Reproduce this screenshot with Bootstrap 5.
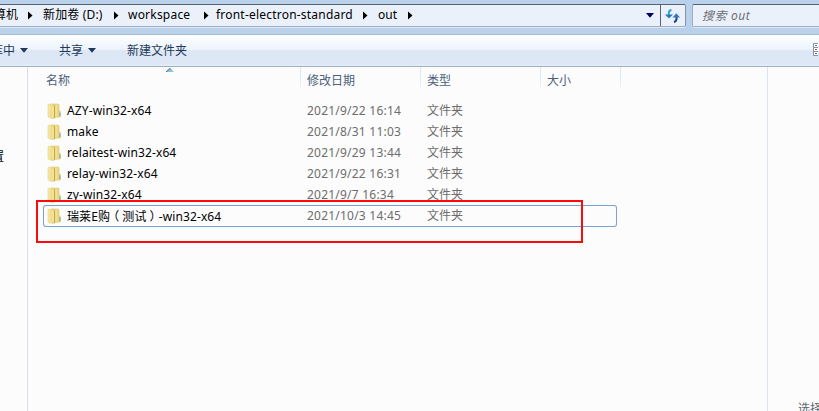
<!DOCTYPE html>
<html lang="zh-CN">
<head>
<meta charset="utf-8">
<meta name="viewport" content="width=device-width, initial-scale=1">
<title>out</title>
<link href="https://cdn.jsdelivr.net/npm/bootstrap@5.3.0/dist/css/bootstrap.min.css" rel="stylesheet">
<style>
body{width:819px;height:411px;background:#fcfcfc;color:#000;font-family:"Noto Sans","Noto Sans CJK SC",sans-serif;font-size:12px;line-height:20px;white-space:nowrap}
.addressbar{height:35px;background:#b9d1ea;padding-top:4px;border-bottom:1px solid #a5bbd6}
.crumbs,.searchbox{height:23px;background:#ebf1fa;border:1px solid #a0adbd;border-top-color:#59636f;box-shadow:0 1px 0 #dce8f5}
.crumbs{width:686px;border-left:0;border-right-color:#8793a3;border-radius:0 2px 2px 0}
.crumb{position:relative;height:21px}
.crumb svg{position:absolute;top:6px}
.c1{width:42px;margin-left:-18px;margin-right:18px}
.c2{width:86px}.c3{width:88px}.c4{width:162px}.c5{width:60px}
.c1 svg{right:-9px}.c2 svg{right:9px}.c3 svg{right:7px}.c4 svg{right:10px}.c5 svg{right:25px}
.t2{margin-left:1px;letter-spacing:.15px}.t4{letter-spacing:.21px}
.dropmark{margin-right:6px}
.refresh{width:25px;border-left:1px solid #59636f}
.searchbox{margin-left:6px;border-right:0;border-radius:2px 0 0 2px;padding-left:9px;color:#6c7076;font-style:italic;line-height:22px;letter-spacing:.6px}
.tools{height:32px;background:linear-gradient(#fdfeff 0,#edf4fc 14px,#dce6f4 16px,#dde7f5 29px,#e4eef9 30px);border-bottom:1px solid #a0afc3;color:#1e395b;line-height:31px;overflow:hidden}
.tool-a{width:59px}.lib{margin-left:-9px;margin-right:5px}
.tool-b{width:68px}.tool-b span{margin-right:5px}
.tool-a svg,.tool-b svg{vertical-align:2px}
.view-icon{margin-top:8px;margin-right:1px}
.side{width:28px;border-right:1px solid #d6e0ee}
.side-label{margin-left:-8px;padding-top:80px}
.files{width:740px;border-right:1px solid #d6e5f5}
.heads{height:33px;color:#4c607a;line-height:27px}
.heads>div{padding-left:6px;background:linear-gradient(#d6e5f5 0,#dfebf7 12px,#fcfcfc 24px) right top/1px 24px no-repeat}
.h-name{width:273px}.heads>.h-name{padding-left:18px}
.h-date,.h-type{width:120px}.h-size{width:80px}
.entry{height:21px;width:574px;margin-left:15px;line-height:21px;color:#6d6d6d}
.entry .fname{width:264px;color:#000;padding-left:4px}
.entry .ftitle{margin-left:6px;letter-spacing:.12px}
.entry .fdate{width:120px;letter-spacing:.22px}
.paren-l{margin-left:-3px;margin-right:3px}
.paren-r{margin-left:3px;margin-right:-3px}
.focused{box-shadow:0 0 0 1px #7da2ce inset;border-radius:3px;height:22px}
.marker{left:36px;top:200px;width:547px;height:43px;border:2px solid #fb0b0b}
.sortmark{left:166px;top:68px}
.hint{left:798px;top:399px;color:#5f6670}
</style>
<script src="https://cdn.jsdelivr.net/npm/bootstrap@5.3.0/dist/js/bootstrap.bundle.min.js"></script>
</head>
<body class="overflow-hidden position-relative d-flex flex-column">
<svg class="position-absolute" width="0" height="0">
<defs>
<linearGradient id="flap" x1="0" x2="1"><stop offset="0" stop-color="#f8eca9"/><stop offset="1" stop-color="#e6cd70"/></linearGradient>
<linearGradient id="cover" x1="0" x2="1"><stop offset="0" stop-color="#e9d27a"/><stop offset=".5" stop-color="#f2e092"/><stop offset="1" stop-color="#dfc566"/></linearGradient>
</defs>
<symbol id="tri" viewBox="0 0 5 9"><path d="M0 0.5L4.500 4.500L0 8.500Z" fill="#000"/></symbol>
<symbol id="down" viewBox="0 0 8 5"><path d="M0 0H8L4 4.800Z"/></symbol>
<symbol id="folder" viewBox="0 0 14 16"><path d="M6 1H11Q12 1 12 2V7.500L13.300 8.500V14L6 14.500Z" fill="url(#cover)" stroke="#d9bf66" stroke-width=".5"/><path d="M1 1.500L5.500 .8L7.500 2.500V15.300L5 15.500L1 14Z" fill="url(#flap)" stroke="#e2cd7c" stroke-width=".5"/><path d="M6 3V14.500" stroke="#f9efba"/><path d="M7.500 2.500V15" stroke="#c7a743"/><path d="M13 9.500V13" stroke="#5aaed2"/></symbol>
</svg>
<header class="addressbar d-flex flex-shrink-0">
  <nav class="crumbs d-flex">
    <div class="crumb c1"><span>计算机</span><svg width="5" height="9"><use href="#tri"/></svg></div>
    <div class="crumb c2"><span class="t2">新加卷 (D:)</span><svg width="5" height="9"><use href="#tri"/></svg></div>
    <div class="crumb c3"><span class="t4">workspace</span><svg width="5" height="9"><use href="#tri"/></svg></div>
    <div class="crumb c4"><span class="t4">front-electron-standard</span><svg width="5" height="9"><use href="#tri"/></svg></div>
    <div class="crumb c5"><span>out</span><svg width="5" height="9"><use href="#tri"/></svg></div>
    <div class="ms-auto d-flex align-items-center">
      <svg class="dropmark" width="8" height="5" fill="#00005c"><use href="#down"/></svg>
      <span class="refresh h-100 d-flex align-items-center ps-1"><svg width="16" height="14" viewBox="0 0 16 14"><path d="M6.500 1Q3.800 1 3.800 4.500V6" fill="none" stroke="#39a6cf" stroke-width="2"/><path d="M0 5.500H8L4 9.500Z" fill="#2878c5"/><path d="M11.500 8V9.500Q11.500 12.500 9 13" fill="none" stroke="#243e80" stroke-width="2"/><path d="M7.500 8.500H15L11.300 4.300Z" fill="#3278c4"/></svg></span>
    </div>
  </nav>
  <div class="searchbox flex-grow-1">搜索 out</div>
</header>
<div class="tools d-flex flex-shrink-0">
  <div class="tool-a"><span class="lib">库中</span><svg width="8" height="5" fill="#1e395b"><use href="#down"/></svg></div>
  <div class="tool-b"><span>共享</span><svg width="8" height="5" fill="#1e395b"><use href="#down"/></svg></div>
  <div class="tool-c">新建文件夹</div>
  <svg class="view-icon ms-auto" width="5" height="14" viewBox="0 0 5 14"><path d="M5 .5H.5V4.500H5M5 4.500H.5V8.500H5M5 8.500H.5V12.500H5" fill="#fff" stroke="#8592a3"/><path d="M2 2h2v1H2zM2 10h2v1H2z" fill="#526b89"/><path d="M2 6h2v1H2z" fill="#c74b42"/></svg>
</div>
<main class="d-flex flex-grow-1">
  <aside class="side"><div class="side-label">置</div></aside>
  <section class="files">
    <div class="heads d-flex"><div class="h-name">名称</div><div class="h-date">修改日期</div><div class="h-type">类型</div><div class="h-size">大小</div></div>
    <div class="entry d-flex"><div class="fname d-flex align-items-center"><svg width="14" height="16"><use href="#folder"/></svg><span class="ftitle">AZY-win32-x64</span></div><div class="fdate">2021/9/22 16:14</div><div>文件夹</div></div>
    <div class="entry d-flex"><div class="fname d-flex align-items-center"><svg width="14" height="16"><use href="#folder"/></svg><span class="ftitle">make</span></div><div class="fdate">2021/8/31 11:03</div><div>文件夹</div></div>
    <div class="entry d-flex"><div class="fname d-flex align-items-center"><svg width="14" height="16"><use href="#folder"/></svg><span class="ftitle">relaitest-win32-x64</span></div><div class="fdate">2021/9/29 13:44</div><div>文件夹</div></div>
    <div class="entry d-flex"><div class="fname d-flex align-items-center"><svg width="14" height="16"><use href="#folder"/></svg><span class="ftitle">relay-win32-x64</span></div><div class="fdate">2021/9/22 16:31</div><div>文件夹</div></div>
    <div class="entry d-flex"><div class="fname d-flex align-items-center"><svg width="14" height="16"><use href="#folder"/></svg><span class="ftitle">zy-win32-x64</span></div><div class="fdate">2021/9/7 16:34</div><div>文件夹</div></div>
    <div class="entry focused d-flex"><div class="fname d-flex align-items-center"><svg width="14" height="16"><use href="#folder"/></svg><span class="ftitle">瑞莱E购<span class="paren-l">（</span>测试<span class="paren-r">）</span>-win32-x64</span></div><div class="fdate">2021/10/3 14:45</div><div>文件夹</div></div>
  </section>
</main>
<svg class="sortmark position-absolute" width="8" height="5"><path d="M0 4L4 0L8 4Z" fill="#8fc4de"/><path d="M0 4L4 .5L5 1.500" fill="none" stroke="#476c86"/></svg>
<div class="marker position-absolute"></div>
<div class="hint position-absolute">选择要预览的文件</div>
</body>
</html>
